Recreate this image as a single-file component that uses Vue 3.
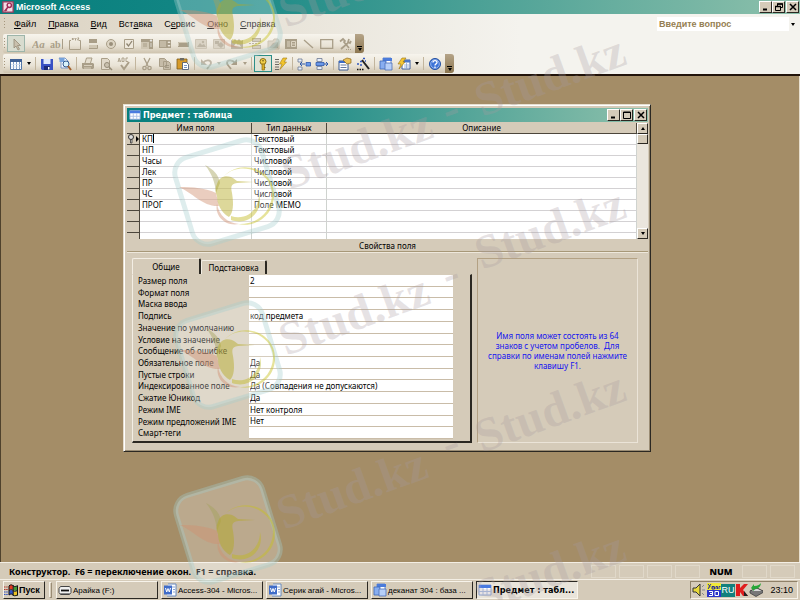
<script setup>
import { ref } from 'vue'

const menus = [
  ['', 'Ф', 'айл'], ['', 'П', 'равка'], ['', 'В', 'ид'], ['Вст', 'а', 'вка'],
  ['С', 'е', 'рвис'], ['', 'О', 'кно'], ['', 'С', 'правка'],
]

const g = '#a99e88'
const l = '#cfc6b3'
const icons = {
  pointer: `<path d="M5 2v9l2-2 2 4 1.500-.8-2-3.700h3z" fill="#c9c0ad" stroke="#958b77" stroke-width=".8"/>`,
  label: `<text x="0" y="11" font-family="Liberation Serif" font-style="italic" font-weight="bold" font-size="11" fill="${g}">Aa</text>`,
  textbox: `<text x="0" y="11" font-family="Liberation Serif" font-weight="bold" font-size="10" fill="${g}">ab</text><path d="M12.500 2v10" stroke="${g}"/>`,
  group: `<path d="M3 3.500H1.500v9h11v-9H11M4 1l1.500 2M5.500 1L4 3M6.500 1l1 1 1-1M7.500 2v1.500M9.500 1H11L9.500 3H11" fill="none" stroke="${g}"/>`,
  toggle: `<path d="M3 2h8v4H3z" fill="${g}"/><path d="M3 8h8v3H3z" fill="${l}"/><path d="M3 11.500h8.500V8" fill="none" stroke="${g}"/>`,
  radio: `<circle cx="7" cy="7" r="4.500" fill="#ddd5c4" stroke="${g}"/><circle cx="7" cy="7" r="2" fill="#9a8f7b"/>`,
  check: `<path d="M2.500 2.500h9v9h-9z" fill="#eee8dc" stroke="${g}"/><path d="M4.500 6.500l2 2.500 3.500-5" fill="none" stroke="#8e8470" stroke-width="1.300"/>`,
  combo: `<path d="M1 2h12v10H1z" fill="${l}"/><path d="M1 2h12v3H1zM9 5h4v7H9z" fill="${g}"/><path d="M3 7h4M3 9h4" stroke="${g}"/><path d="M10 3h2l-1 1.500zM10 7h2M10 9h2" stroke="#eee" fill="#eee" stroke-width=".7"/>`,
  list: `<path d="M1 3h12v8H1z" fill="${g}"/><path d="M2 5h6M2 7h6M2 9h6" stroke="#ddd4c2"/><path d="M9.500 6h3L11 4zM9.500 8h3L11 10z" fill="#eee8dc"/>`,
  button: `<path d="M2 5h11v5H2z" fill="${g}"/><path d="M2.500 9V5.500H12" fill="none" stroke="${l}"/>`,
  image: `<path d="M1.500 2.500h11v9h-11z" fill="${l}" stroke="#bdb29d"/><path d="M3 10l3-4 2 2 2-1 2 3z" fill="${g}"/><circle cx="9" cy="5" r="1.200" fill="${g}"/>`,
  object: `<path d="M1.500 2.500h11v9h-11z" fill="${l}" stroke="#bdb29d"/><path d="M3 4h4v3H3zM5 8l4-3 3 3-3 3z" fill="${g}"/>`,
  bound: `<path d="M1 3l2 1 2-2 2 2 2-2 2 2 2-1v9H1z" fill="${g}"/><path d="M4 9l2-3 2 2 1-1 2 3z" fill="#e2dac9"/>`,
  pagebreak: `<path d="M4 1h9v4H4zM4 8h9v4H4z" fill="${g}"/><path d="M1 6.500h12" stroke="${g}" stroke-dasharray="2 1"/><path d="M5 3h7M5 10h7" stroke="#e2dac9"/>`,
  tabs: `<path d="M2 4h5l1-2h4l1 2v8H2z" fill="${l}" stroke="#bdb29d"/><path d="M7 6l5-1v6H3z" fill="${g}"/>`,
  subform: `<path d="M1 2h12v10H1z" fill="${g}"/><path d="M3 5h3M3 7h3M3 9h3M7.500 4.500h4v5h-4zM7.500 7h4" stroke="#ddd4c2" fill="none"/>`,
  line: `<path d="M2 3l9 8" stroke="${g}" stroke-width="1.300"/>`,
  rect: `<path d="M.7 2.700h12v8.600H.7z" fill="none" stroke="${g}" stroke-width="1.300"/>`,
  tools: `<path d="M2 4.500l3-2.500 2 2-1 1 5 6M11 2l-1 3 2 1 1-2M10 6l-7 6" fill="none" stroke="${g}" stroke-width="1.700"/><path d="M8 12.500h5" stroke="${g}" stroke-dasharray="1 1"/>`,
  table: `<path d="M1.500 2.500h11v10h-11z" fill="#fff" stroke="#5377a8"/><path d="M1 2h12v3H1z" fill="#3f6196"/><path d="M4.500 5v7M7.500 5v7M10.500 5v7" stroke="#7d9cc6"/><path d="M2 7.500h10M2 10h10" stroke="#cfdcee" stroke-width=".7"/>`,
  save: `<path d="M1 2h12v11H2l-1-1z" fill="#3850c4"/><path d="M3.500 2h7v5h-7z" fill="#dfe8fb"/><path d="M4 9h6v4H4z" fill="#1c2a78"/><path d="M8 10h1.500v2.500H8z" fill="#fff"/>`,
  search: `<path d="M1 1h6l3 3v7H3V4z" fill="#f4f8ff" stroke="#5f83bd" stroke-width=".8"/><path d="M1.500 1h5v4h-5z" fill="#76a3dc"/><circle cx="8" cy="7" r="3" fill="#d9f2fa" stroke="#335a8f"/><path d="M10 9l3 4" stroke="#a2602b" stroke-width="2"/>`,
  print: `<path d="M4 6l1.500-5H11L9.500 6" fill="#e5decf" stroke="${g}"/><path d="M1 6h11l1 1v4l-1 1H2l-1-1z" fill="${g}"/><path d="M3 8.500h8M3 11h7" stroke="#d8cfbd"/>`,
  preview: `<path d="M2.500 1.500h6l2 2v9h-8z" fill="#e0d8c8" stroke="${g}"/><circle cx="8" cy="8" r="2.500" fill="#c9c0ad" stroke="#958b77"/><path d="M10 10l3 3" stroke="#958b77" stroke-width="1.500"/>`,
  spell: `<path d="M1 5l1.200-4L3.500 5M1.500 4h2M5 1h2v3.500H5zM11 1H9v3.500h2" fill="none" stroke="${g}" stroke-width=".9"/><path d="M4 8l3 4 5-7" fill="none" stroke="${g}" stroke-width="2"/>`,
  cut: `<path d="M4 1l4 8M10 1L6 9" stroke="${g}" stroke-width="1.300"/><circle cx="4.500" cy="11" r="1.700" fill="none" stroke="${g}" stroke-width="1.300"/><circle cx="9.500" cy="11" r="1.700" fill="none" stroke="${g}" stroke-width="1.300"/>`,
  copy: `<path d="M1.500 1.500h5l2 2v6h-7zM5.500 4.500h5l2 2v6h-7z" fill="#c6bca8" stroke="${g}"/><path d="M7 8.500h4M7 10.500h4" stroke="#958b77" stroke-width=".7"/>`,
  paste: `<path d="M1 2h10v10H1z" fill="#d79b2a" stroke="#7c5a1c" stroke-width=".8"/><path d="M4 1h4v2.500H4z" fill="#6c6a64"/><path d="M6.500 5.500h4l2 2v5h-6z" fill="#fff" stroke="#40506e" stroke-width=".8"/><path d="M8 8.500h3M8 10.500h3" stroke="#5378b5" stroke-width=".8"/>`,
  undo: `<path d="M4 6c3-4 8-3 8 0 0 2-2 3-4 6" fill="none" stroke="${g}" stroke-width="1.800"/><path d="M2 2v6h6z" fill="${g}"/>`,
  redo: `<path d="M10 6C7 2 2 3 2 6c0 2 2 3 4 6" fill="none" stroke="${g}" stroke-width="1.800"/><path d="M12 2v6H6z" fill="${g}"/>`,
  key: `<circle cx="7" cy="4.500" r="3" fill="#f0ce48" stroke="#8a6d13"/><path d="M6 7h2.500v6H6z" fill="#dcae24" stroke="#8a6d13" stroke-width=".7"/><path d="M8 10.500h1.500" stroke="#8a6d13"/><circle cx="7" cy="3.700" r=".8" fill="#6b5510"/>`,
  index: `<path d="M1 2.500h4M1 5h4M1 7.500h4M1 10h4M1 12.500h4" stroke="#6c6a64"/><path d="M9 1h4l-3 4h2.500L6 12.500 8 7H5.500z" fill="#f2c52d" stroke="#a57e17" stroke-width=".6"/>`,
  insert: `<path d="M1 2h4v3H1zM1 10h4v3H1z" fill="#e7effb" stroke="#6d7892" stroke-width=".8"/><path d="M9 5.500h4.500v3.500H9z" fill="#6b98e8" stroke="#2d58ac" stroke-width=".8"/><path d="M3 7h5M3 7l2-2M3 7l2 2" stroke="#2d58ac" fill="none"/>`,
  remove: `<path d="M2 1.500h5v3H2zM2 9.500h5v3H2z" fill="#e7effb" stroke="#6d7892" stroke-width=".8"/><path d="M1 5.500h8v3H1z" fill="#6b98e8" stroke="#2d58ac" stroke-width=".8"/><path d="M9 7h4M11 5l2 2-2 2" stroke="#2d58ac" fill="none"/>`,
  props: `<path d="M1 4h9v9H1z" fill="#fff" stroke="#3b5a91"/><path d="M1 4h9v2H1z" fill="#3b6bc6"/><path d="M2.500 8h6M2.500 10.500h6" stroke="#63779c"/><path d="M5 3l4-2 4 1v4l-4 1-2-2z" fill="#eac25a" stroke="#8e6a1e" stroke-width=".7"/>`,
  wand: `<path d="M6 3l7 9" stroke="#222" stroke-width="2"/><path d="M1 7h2M4 4.500h2M4 8h2M7 1.500h2M9 4h1" stroke="#3559bd" stroke-width="1.300"/><path d="M1 12.500h7" stroke="#111" stroke-width="1.500" stroke-dasharray="1.500 1"/>`,
  database: `<path d="M4 1h8v8H4z" fill="#fff" stroke="#6a8cd0"/><path d="M4 1h9v3H4z" fill="#4b7bda"/><path d="M1 4h6v8H1z" fill="#88aef0" stroke="#3d68b8" stroke-width=".8"/><path d="M6 6h7v7H6z" fill="#b6cff8" stroke="#4b70b8" stroke-width=".8"/>`,
  newobj: `<path d="M5 3h8v9H5z" fill="#fff" stroke="#3d5f9d"/><path d="M5 3h8v2.500H5z" fill="#4b77c9"/><path d="M7 8h5M7 10h5M9.500 6v6" stroke="#8ba6d2" stroke-width=".8"/><path d="M5 1h4L6 5h2l-6 7 2-5H1z" fill="#f3c634" stroke="#9b7413" stroke-width=".6"/>`,
  help: `<circle cx="7" cy="7" r="5.500" fill="#3c73d8" stroke="#2450a0"/><circle cx="7" cy="7" r="4.300" fill="none" stroke="#b7cff8" stroke-width=".7"/><path d="M5 5.500c0-2.500 4-2.500 4 0 0 1.500-2 1.300-2 3M7 9.500V11" fill="none" stroke="#fff" stroke-width="1.300"/>`,
  access: `<path d="M1 1h12v12H1z" fill="#f3dde4" stroke="#9a3a5c" stroke-width="1.500"/><circle cx="8.500" cy="5" r="2.500" fill="none" stroke="#a02a56" stroke-width="1.700"/><path d="M7 7l-4 5M4 10l2 1" stroke="#a02a56" stroke-width="1.700"/>`,
  sheet: `<path d="M1 2h12v10H1z" fill="#fff" stroke="#88a4d8"/><path d="M1 2h12v3H1z" fill="#4a7be0"/><path d="M5 5v7M9 5v7M1 8.500h12" stroke="#a8bde6"/>`,
  windows: `<path d="M5 3c2-2 3-1 4 0v4C8 6 7 5.500 5 7z" fill="#e23c22"/><path d="M9.500 3c1 1 2 1 4 0v4c-2 1-3 1-4 0z" fill="#3f9b36"/><path d="M5 8c2-1.500 3-1 4 0v4c-1-1-2-1.500-4 0z" fill="#2f51c8"/><path d="M9.500 8c1 1 2 1 4 0v4c-2 1-3 1-4 0z" fill="#eec324"/><path d="M9.200 2v11M13.500 2.500v10M5 3v9M5 2.800c2-1.500 3-1 4 0s2 1 4.500 0M5 7.500c2-1.500 3-1 4 0s2 1 4.500 0M5 12c2-1.500 3-1 4 0s2 1 4.500 0" fill="none" stroke="#111" stroke-width="1"/><path d="M0 4h4M0 6.500h4" stroke="#b2372a" stroke-width="1.200" stroke-dasharray="1.500 .7"/><path d="M0 9h4M0 11.500h4" stroke="#2f51c8" stroke-width="1.200" stroke-dasharray="1.500 .7"/>`,
  drive: `<path d="M1 5.500l1.500-2h9l1.500 2v4l-1.500 2h-9L1 9.500z" fill="#f0f0f0" stroke="#444"/><path d="M3 7.500h8" stroke="#111" stroke-width="1.800"/><path d="M2 10.500h10" stroke="#888"/>`,
  word: `<path d="M5 1h8v12H4" fill="#fff" stroke="#6788bc"/><path d="M9 4h3M10 6.500h2M10 9h2" stroke="#8ba6d2"/><path d="M1 2.500h8v9H1z" fill="#3f6cc8"/><path d="M2.500 5l1.200 4L5 5.500 6.300 9l1.200-4" fill="none" stroke="#fff"/>`,
  volume: `<path d="M1 5h3l4-4v12L4 9H1z" fill="#e8d83a" stroke="#333"/><path d="M10 4l2-2M10 7h3M10 10l2 2" stroke="#888"/>`,
  calendar: `<path d="M0 0h14v7H0z" fill="#f1e83a"/><path d="M0 7h14v7H0z" fill="#2b33c9"/><path d="M1 1l2 2.500L1 6M4 1L1.500 4.500M5 4h2.500V6H5V3.500h2.500M9 6V3.500h1.500V6M12 6V3.500h1.500" fill="none" stroke="#1c2399" stroke-width=".9"/><path d="M2 8.500h3.500v4H2M3 10.500h2.500M8 8.500h3.500v4H8z" fill="none" stroke="#fff"/>`,
  kaspersky: `<path d="M1 1h4v4l4-4h4L8 7l5 6H8L5 9v4H1z" fill="#e01d1d"/><path d="M9 8l4 5H9z" fill="#222"/>`,
  eject: `<path d="M1 8l7-3 6 3-7 4z" fill="#d9d9d9" stroke="#333"/><path d="M1 8v2l6 3.500 7-4V8" fill="#777" stroke="#333" stroke-width=".7"/><path d="M2 5l3-4v2c4 0 6-2 7-3-.5 4-3 6-7 6v2z" fill="#27a737"/>`,
}

const designTools = ['label', 'textbox', 'group', 'toggle', 'radio', 'check', 'combo', 'list', 'button', 'image', 'object', 'bound', 'pagebreak', 'tabs', 'subform', 'line', 'rect', 'tools']
const mainTools = ['table', '>', '|', 'save', 'search', '|', 'print', 'preview', 'spell', '|', 'cut', 'copy', 'paste', '|', 'undo', '>g', 'redo', '>g', '|', 'key', 'index', '|', 'insert', 'remove', '|', 'props', 'wand', '|', 'database', 'newobj', '>', '|', 'help']

const fields = ref([
  ['КП', 'Текстовый'], ['НП', 'Текстовый'], ['Часы', 'Числовой'], ['Лек', 'Числовой'], ['ПР', 'Числовой'],
  ['ЧС', 'Числовой'], ['ПРОГ', 'Поле МЕМО'], ['', ''], ['', ''], ['', ''],
])

const properties = ref([
  ['Размер поля', '2'], ['Формат поля', ''], ['Маска ввода', ''], ['Подпись', 'код предмета'],
  ['Значение по умолчанию', ''], ['Условие на значение', ''], ['Сообщение об ошибке', ''],
  ['Обязательное поле', 'Да'], ['Пустые строки', 'Да'], ['Индексированное поле', 'Да (Совпадения не допускаются)'],
  ['Сжатие Юникод', 'Да'], ['Режим IME', 'Нет контроля'], ['Режим предложений IME', 'Нет'], ['Смарт-теги', ''],
])

const tasks = [
  ['drive', 'Арайка (F:)'], ['word', 'Access-304 - Micros...'], ['word', 'Серик агай - Micros...'],
  ['database', 'деканат 304 : база ...'], ['sheet', 'Предмет : табл...'],
]

const marks = [[286, 28], [289, 190], [286, 356], [284, 530], [482, 117], [482, 270], [482, 453], [482, 613]]
const dashes = [[448, 126], [448, 291], [448, 460]]
const logos = [[228, 15], [227, 192], [228, 355], [228, 530]]
</script>

<template>
  <div class="screen">
    <header class="titlebar">
      <svg class="ico small" viewBox="0 0 14 14" v-html="icons.access"></svg>
      <span class="title">Microsoft Access</span>
      <div class="winbtns">
        <button aria-label="Свернуть"><svg viewBox="0 0 10 8"><path d="M2 6.500h4" stroke="#000" stroke-width="2" /></svg></button>
        <button aria-label="Восстановить"><svg viewBox="0 0 10 8"><path d="M3.500 3V1h5v3.500H7M1.500 3.500h5v4h-5z" fill="none" stroke="#000" /><path d="M1 3.500h6M3 1h6" stroke="#000" stroke-width="1.500" /></svg></button>
        <button class="close" aria-label="Закрыть"><svg viewBox="0 0 10 8"><path d="M2 1l6 6M8 1L2 7" stroke="#000" stroke-width="1.500" /></svg></button>
      </div>
    </header>

    <div class="bars">
      <nav class="menubar">
        <i class="grip"></i>
        <button v-for="m in menus" :key="m.join('')">{{ m[0] }}<u>{{ m[1] }}</u>{{ m[2] }}</button>
        <div class="ask">
          <input type="text" value="Введите вопрос" aria-label="Введите вопрос">
          <button aria-label="Открыть список"><i class="caret"></i></button>
        </div>
      </nav>
      <div class="toolbar">
        <i class="grip"></i>
        <button class="tool active faded" aria-label="pointer"><svg class="ico" viewBox="0 0 14 14" v-html="icons.pointer"></svg></button>
        <i class="space"></i>
        <button v-for="t in designTools" :key="t" class="tool" :aria-label="t"><svg class="ico" viewBox="0 0 14 14" v-html="icons[t]"></svg></button>
        <button class="cap" aria-label="Параметры панели"><i></i></button>
      </div>
      <div class="toolbar">
        <i class="grip"></i>
        <template v-for="(t, i) in mainTools" :key="i">
          <i v-if="t === '|'" class="sep"></i>
          <button v-else-if="t[0] === '>'" class="drop" :class="{ gray: t === '>g' }" aria-label="Список"><i class="caret"></i></button>
          <button v-else class="tool" :class="{ active: t === 'key' }" :aria-label="t"><svg class="ico" viewBox="0 0 14 14" v-html="icons[t]"></svg></button>
        </template>
        <button class="cap" aria-label="Параметры панели"><i></i></button>
      </div>
    </div>

    <main class="desk">
      <section class="window">
        <header class="titlebar inner">
          <svg class="ico small" viewBox="0 0 14 14" v-html="icons.sheet"></svg>
          <span class="title">Предмет : таблица</span>
          <div class="winbtns">
            <button aria-label="Свернуть"><svg viewBox="0 0 10 8"><path d="M2 6.500h4" stroke="#000" stroke-width="2" /></svg></button>
            <button aria-label="Развернуть"><svg viewBox="0 0 10 8"><path d="M1.500 1h7v6.500h-7z" fill="none" stroke="#000" /><path d="M1 1.500h8" stroke="#000" /></svg></button>
            <button class="close" aria-label="Закрыть"><svg viewBox="0 0 10 8"><path d="M2 1l6 6M8 1L2 7" stroke="#000" stroke-width="1.500" /></svg></button>
          </div>
        </header>

        <div class="design">
          <table>
            <colgroup><col class="c-sel"><col class="c-name"><col class="c-type"><col></colgroup>
            <thead>
              <tr><th></th><th>Имя поля</th><th>Тип данных</th><th>Описание</th></tr>
            </thead>
            <tbody>
              <tr v-for="(f, i) in fields" :key="i">
                <th>
                  <svg v-if="i === 0" class="rowkey" viewBox="0 0 12 10"><circle cx="4" cy="3" r="2.500" fill="#ddd" stroke="#333" /><path d="M3.500 5.500h1.500V9H3.500z" fill="#ddd" stroke="#333" stroke-width=".8" /><path d="M9 2l3 3-3 3z" /></svg>
                </th>
                <td><span>{{ f[0] }}</span><i v-if="i === 0" class="cursor"></i></td>
                <td>{{ f[1] }}</td>
                <td></td>
              </tr>
            </tbody>
          </table>
          <div class="scroll">
            <button aria-label="Вверх"><i class="caret up"></i></button>
            <div class="thumb"></div>
            <div class="track"></div>
            <button aria-label="Вниз"><i class="caret"></i></button>
          </div>
        </div>

        <h2 class="caption">Свойства поля</h2>

        <div class="lower">
          <div class="tabset">
            <div class="tabs" role="tablist">
              <button role="tab" class="tab on" aria-selected="true">Общие</button>
              <button role="tab" class="tab" aria-selected="false">Подстановка</button>
            </div>
            <div class="panel">
              <div v-for="(p, i) in properties" :key="i" class="prop">
                <label :for="'p' + i">{{ p[0] }}</label>
                <input :id="'p' + i" v-model="p[1]" type="text">
              </div>
            </div>
          </div>
          <aside class="hint">Имя поля может состоять из 64 знаков с учетом пробелов.&nbsp; Для справки по именам полей нажмите клавишу F1.</aside>
        </div>
      </section>
    </main>

    <footer class="status">
      <span class="msg">Конструктор.&nbsp; F6 = переключение окон.&nbsp; F1 = справка.</span>
      <i class="cell"></i><i class="cell"></i><i class="cell"></i><i class="cell"></i>
      <b class="num">NUM</b>
      <i class="cell"></i><i class="cell"></i>
    </footer>

    <div class="taskbar">
      <button class="start"><svg class="ico" viewBox="0 0 14 14" v-html="icons.windows"></svg>Пуск</button>
      <i class="split"></i>
      <div class="tasks">
        <button v-for="(t, i) in tasks" :key="i" class="task" :class="{ pressed: i === 4 }"><svg class="ico" viewBox="0 0 14 14" v-html="icons[t[0]]"></svg><span>{{ t[1] }}</span></button>
      </div>
      <div class="tray">
        <svg class="ico" viewBox="0 0 14 14" v-html="icons.volume"></svg>
        <svg class="ico" viewBox="0 0 14 14" v-html="icons.calendar"></svg>
        <span class="lang">RU</span>
        <svg class="ico" viewBox="0 0 14 14" v-html="icons.kaspersky"></svg>
        <svg class="ico" viewBox="0 0 14 14" v-html="icons.eject"></svg>
        <time>23:10</time>
      </div>
    </div>

    <svg class="watermark" width="800" height="600" viewBox="0 0 800 600" aria-hidden="true">
      <g v-for="(p, i) in logos" :key="'l' + i" :transform="`translate(${p[0]} ${p[1]})`">
        <rect x="-45" y="-45" width="90" height="90" rx="16" transform="rotate(-17)" fill="#fff" fill-opacity=".25" stroke="#a4cccd" stroke-opacity=".36" stroke-width="5" />
        <g fill-opacity=".45">
          <path d="M-48-5c14 0 27 1 37 6l3 13c-16 1-26-13-40-19z" fill="#d09070" />
          <path d="M-22-27c8 4 14 10 15 18l-4 10c-1-11-4-19-11-28z" fill="#a5a25c" />
          <path d="M-10-8c2-7 8-9 14-7 3 1 4 3 6 4l17 1-17 1c-7 1-6 5-5 10 2 12 1 20-3 24-8-4-12-14-12-21-2-4-2-8 0-12z" fill="#b4a81e" />
          <path d="M-3-16c17-18 50-7 50 19 0 20-18 33-36 29 17 1 33-10 34-29 1-22-30-36-48-19z" fill="#c8c01e" />
          <path d="M4 24c14 5 28-5 28-22 5 18-11 32-28 26z" fill="#c2b81e" />
          <path d="M-10 12c2 11 10 19 22 20-14 3-25-9-22-20z" fill="#d09070" />
        </g>
      </g>
      <text v-for="(p, i) in marks" :key="'m' + i" :transform="`translate(${p[0]} ${p[1]}) rotate(-20)`">Stud.kz</text>
      <text v-for="(p, i) in dashes" :key="'d' + i" :transform="`translate(${p[0]} ${p[1]}) rotate(-20)`">-</text>
    </svg>
  </div>
</template>

<style>
body { margin: 0; }
</style>

<style scoped>
.screen {
  --face: #d5cbb9;
  --ui: "Liberation Sans", Arial, sans-serif;
  --form: "Noto Sans", sans-serif;
  --heading: "DejaVu Sans Condensed", "DejaVu Sans", sans-serif;
  position: relative;
  display: flex;
  flex-direction: column;
  min-height: 100vh;
  overflow: hidden;
  background: var(--face);
  color: #000;
  font: 9px/11px var(--ui);
}
.screen * { box-sizing: border-box; }
button, input {
  margin: 0;
  padding: 0;
  border: 0;
  background: none;
  color: inherit;
  font: inherit;
  border-radius: 0;
}
i { font-style: normal; }
.ico { display: block; flex: none; width: 14px; height: 14px; }
.ico.small { width: 12px; height: 12px; }

.titlebar {
  display: flex;
  align-items: center;
  gap: 2px;
  height: 14px;
  padding: 0 1px 0 2px;
  background: linear-gradient(90deg, #067f7d, #138684 25%, #8dc0ab);
  color: #fff;
}
.title { flex: 1; font-weight: bold; }
.winbtns { display: flex; }
.winbtns button, .scroll button, .thumb {
  display: flex;
  align-items: center;
  justify-content: center;
  background: var(--face);
  border: 1px solid;
  border-color: #fff #2b2822 #2b2822 #fff;
}
.winbtns button { width: 13px; height: 12px; }
.winbtns svg { width: 10px; height: 8px; }
.winbtns .close { margin-left: 1px; }

.bars {
  padding: 1px 0;
  background: linear-gradient(90deg, #dbd2c1, #f4f3ee 65%);
  border-bottom: 2px solid #21130a;
}
.menubar { display: flex; align-items: center; height: 18px; gap: 12px; padding: 0 3px 0 4px; }
.grip {
  width: 3px;
  height: 12px;
  background: repeating-linear-gradient(#a4967d 0 1px, transparent 1px 3px);
  background-size: 1px 100%;
  background-repeat: no-repeat;
}
.menubar .grip { margin-right: -5px; }
.ask { display: flex; align-items: center; margin-left: auto; width: 140px; height: 14px; background: #fff; }
.ask input { flex: 1; min-width: 0; padding-left: 2px; color: #957e52; font-weight: bold; }
.ask button { display: flex; align-items: center; justify-content: center; width: 8px; height: 14px; background: #f4f3ee; }
.caret { border: 2px solid transparent; border-top: 3px solid #000; border-bottom: 0; }
.caret.up { border-top: 0; border-bottom: 3px solid #000; }

.toolbar {
  display: flex;
  align-items: center;
  width: max-content;
  height: 19px;
  margin: 1px 0 0 3px;
  background: linear-gradient(#f7f4ed, #e9e3d6 60%, #cfc4af);
  border-radius: 2px 4px 4px 2px;
}
.toolbar .grip { width: 4px; margin-left: 1px; margin-right: -1px; }
.tool { display: flex; align-items: center; justify-content: center; width: 18px; height: 17px; }
.tool.active { border: 1px solid #2c8e88; background: #dfe3d5; }
.tool.active.faded { border-color: #9db5aa; background: #d8dccf; }
.space { width: 5px; }
.sep { width: 5px; height: 13px; background: linear-gradient(#c2b59d, #c2b59d) 2px 0 / 1px 100% no-repeat; }
.drop { display: flex; align-items: center; justify-content: center; width: 8px; height: 17px; }
.drop.gray .caret { border-top-color: #a99e88; }
.cap {
  display: flex;
  flex-direction: column;
  align-items: center;
  justify-content: flex-end;
  gap: 1px;
  align-self: stretch;
  width: 9px;
  padding-bottom: 2px;
  margin-left: 1px;
  background: linear-gradient(#b5a488, #8c7650);
  border-radius: 0 3px 3px 0;
}
.cap::before { content: ""; width: 5px; height: 1px; background: #000; }
.cap i { border: 2px solid transparent; border-top: 3px solid #000; border-bottom: 0; }

.desk {
  position: relative;
  flex: 1;
  background: #a48d67;
  border-left: 1px solid #4e412c;
  border-right: 1px solid #e8e0d0;
}
.window {
  position: absolute;
  left: 122px;
  top: 28px;
  width: 528px;
  padding: 3px 2px 3px 3px;
  background: var(--face);
  border: 1px solid;
  border-color: #e6dfd1 #2b2822 #2b2822 #e6dfd1;
  box-shadow: inset 1px 1px #fff, inset -1px -1px #9a8c74;
  font-family: var(--form);
  font-size: 8px;
}
.titlebar.inner { font-family: var(--heading); font-size: 9px; }
.design { display: flex; height: 116px; margin-top: 1px; overflow: hidden; }
table { flex: 1; border-collapse: separate; border-spacing: 0; table-layout: fixed; background: #fff; }
.c-sel { width: 13px; }
.c-name { width: 112px; }
.c-type { width: 75px; }
th, td { height: 11px; padding: 0; line-height: 10px; white-space: nowrap; }
th { font-weight: normal; background: var(--face); border-right: 1px solid #4c463b; border-bottom: 1px solid #4c463b; }
td { padding-left: 2px; border-right: 1px solid #cfd3cf; border-bottom: 1px solid #d3d1d3; }
.rowkey { display: block; width: 12px; height: 10px; }
.cursor { display: inline-block; width: 1px; height: 9px; background: #000; vertical-align: top; }
.scroll { display: flex; flex-direction: column; width: 11px; background: #ebe6dd; }
.scroll button { height: 11px; }
.thumb { height: 10px; }
.track { flex: 1; }
.caption {
  margin: 0;
  height: 13px;
  font: inherit;
  line-height: 13px;
  text-align: center;
  border-bottom: 1px solid #a79878;
  box-shadow: 0 1px #eee8dc;
}
.lower { display: flex; gap: 5px; padding: 6px 10px 5px 5px; }
.tabset { width: 340px; }
.tabs { display: flex; align-items: flex-end; height: 16px; }
.tab {
  height: 14px;
  width: 66px;
  border: 1px solid;
  border-color: #f3eee4 #2b2822 transparent #f3eee4;
  border-right-width: 2px;
  border-bottom: 0;
  border-radius: 2px 2px 0 0;
}
.tab.on { width: 69px; height: 16px; }
.panel {
  display: flex;
  flex-direction: column;
  height: 169px;
  padding: 0 17px 2px 5px;
  border: 1px solid;
  border-color: #f3eee4 #2b2822 #2b2822 #f3eee4;
  border-right-width: 2px;
  border-bottom-width: 2px;
  border-top-color: transparent;
}
.prop { display: flex; flex: 1; min-height: 0; }
.prop label { width: 111px; line-height: 12px; white-space: nowrap; }
.prop input { flex: 1; min-width: 0; padding: 0 1px; background: #fff; border-bottom: 1px solid #c9bca8; }
.hint {
  display: flex;
  align-items: center;
  flex: 1;
  padding: 0 8px;
  border: 1px solid;
  border-color: #b3a184 #ebe4d8 #ebe4d8 #b3a184;
  color: #1414f0;
  line-height: 10px;
  text-align: center;
}

.status {
  display: flex;
  align-items: center;
  gap: 3px;
  height: 17px;
  padding: 0 5px 0 9px;
  border-top: 1px solid #f3eee4;
  font-family: "Noto Sans", sans-serif;
  font-weight: bold;
}
.msg { flex: 1; }
.cell { width: 25px; height: 13px; border: 1px solid #e0d8c9; }
.num { width: 36px; text-align: center; }

.taskbar { display: flex; align-items: center; height: 21px; padding: 0 2px 0 3px; border-top: 1px solid #f3eee4; }
.taskbar button, .tray {
  display: flex;
  align-items: center;
  height: 18px;
  border: 1px solid;
  border-color: #f7f3ea #2b2822 #2b2822 #f7f3ea;
}
.taskbar .start { width: 42px; gap: 1px; font-weight: bold; }
.split { width: 3px; height: 16px; margin: 0 4px; border: 1px solid; border-color: #f7f3ea #9a8c74 #9a8c74 #f7f3ea; }
.tasks { display: flex; flex: 1; gap: 3px; max-width: 522px; }
.taskbar .task { flex: 1; min-width: 0; gap: 1px; padding-left: 1px; font-size: 8px; white-space: nowrap; }
.taskbar .task.pressed {
  background: #e9e4da;
  border-color: #2b2822 #f7f3ea #f7f3ea #2b2822;
  font-family: var(--heading);
  font-weight: bold;
  font-size: 9px;
}
.tray { margin-left: auto; width: 108px; padding: 0 4px 0 1px; border-color: #8f8168 #f7f3ea #f7f3ea #8f8168; }
.lang { width: 14px; background: #12807d; color: #fff; line-height: 13px; text-align: center; }
.tray time { margin-left: auto; }
.tray .ico:nth-child(1) { margin-right: 1px; }

.watermark { position: absolute; left: 0; top: 0; pointer-events: none; }
.watermark text { font: bold 48px "Liberation Serif", serif; fill: #a79ba0; fill-opacity: .28; }
</style>
